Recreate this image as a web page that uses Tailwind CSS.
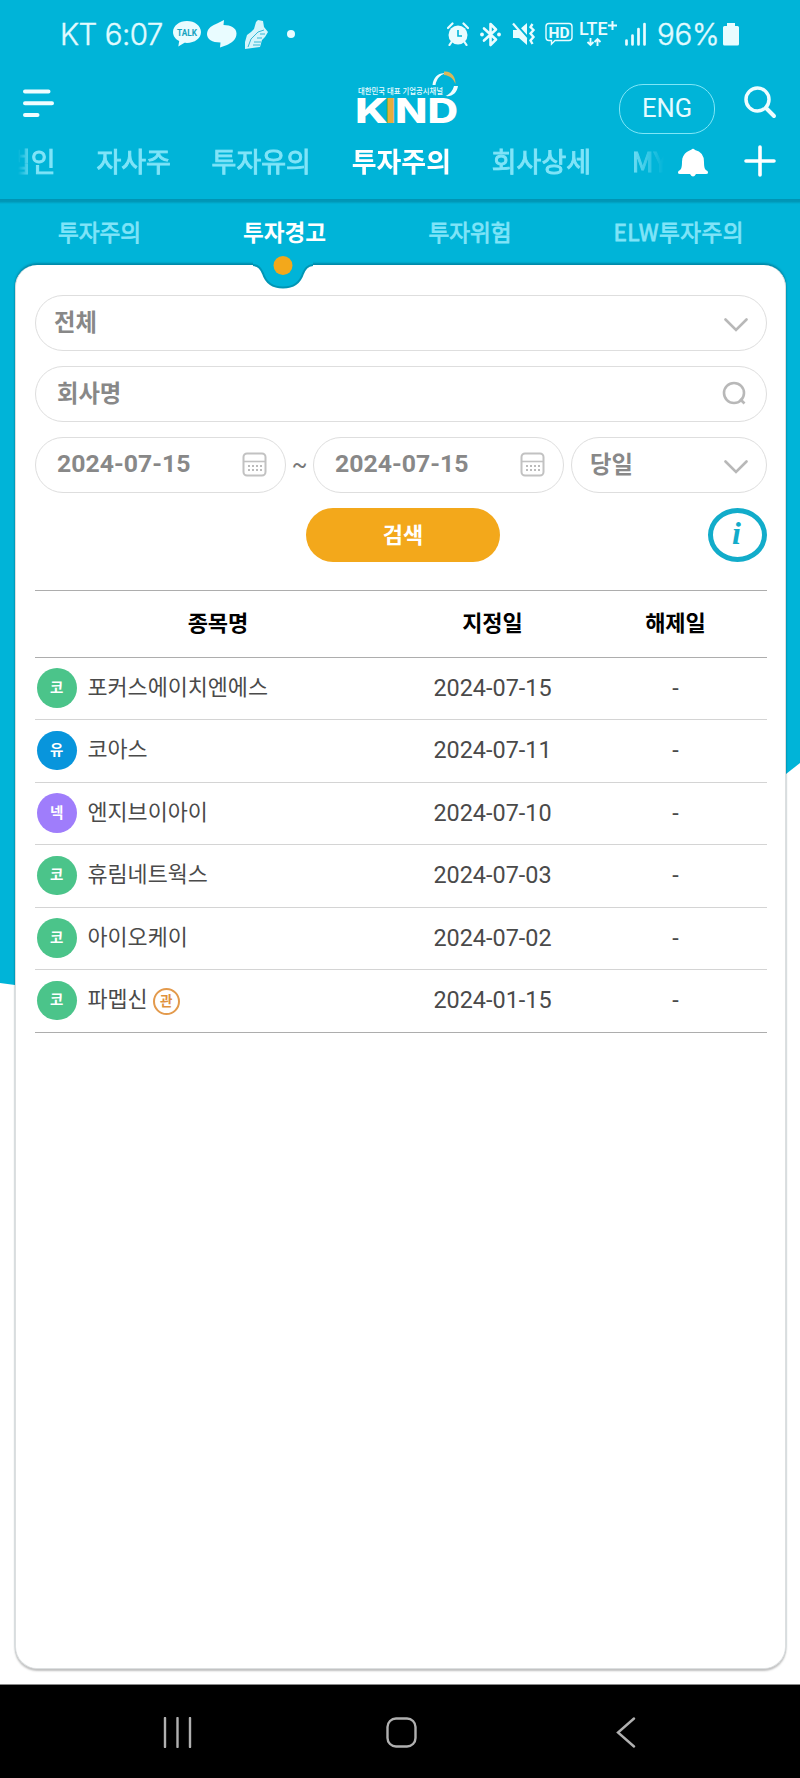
<!DOCTYPE html>
<html lang="ko">
<head>
    <meta charset="UTF-8">
    <meta name="viewport" content="width=device-width, initial-scale=1.0">
    <title>KIND - 투자경고</title>
    <script src="https://cdn.jsdelivr.net/npm/@tailwindcss/browser@4"></script>
</head>
<body class="bg-white font-['Roboto','Noto_Sans_CJK_KR',sans-serif] text-[#4a4a4a]">
<div class="relative w-[800px] h-[1778px] overflow-hidden flex flex-col">

    <!-- Slanted page background -->
    <svg class="absolute inset-0 -z-10" width="800" height="1000" viewBox="0 0 800 1000">
        <path d="M0 0H800V763L786 774L400 1010L15 985L0 983Z" fill="#00b4d8"/>
    </svg>

    <!-- Status bar -->
    <div class="h-[68px] shrink-0 flex items-center text-[#e2fbff] whitespace-nowrap">
        <span class="ml-[60px] w-[113px] text-[29.5px] font-light font-['Inter','Noto_Sans_CJK_KR',sans-serif] tracking-[-0.5px] [-webkit-text-stroke:0.4px_#e2fbff]">KT 6:07</span>
        <svg class="w-[28px] h-[28px]" viewBox="0 0 28 28">
            <path d="M14 1C6.300 1 0 5.800 0 12c0 4 2.500 7.200 6.200 9L5.300 26.500 11.500 22.800C20.500 23.800 28 19 28 12 28 5.800 21.700 1 14 1Z" fill="#e9fcff"/>
            <text x="4" y="15.500" font-family="Roboto" font-weight="700" font-size="9.500" textLength="20" lengthAdjust="spacingAndGlyphs" fill="#18a3bf">TALK</text>
        </svg>
        <svg class="ml-[6px] w-[30px] h-[28px]" viewBox="0 0 30 28">
            <path d="M17 0 16.500 5C24 5 29.500 8 29.500 13.500 29.500 20 24 23 20 25L13 27.500 13.500 22.500C5 22.500 0 19 0 14 0 8 6 5 10 3.500Z" fill="#e9fcff"/>
        </svg>
        <svg class="ml-[8px] w-[24px] h-[29px]" viewBox="0 0 24 29">
            <path d="M13 0 18 1 19 7 23 12 20 17 17 20 15 27 0 29V22L2 15 6 12 9 9 11 2Z" fill="#d5f5fb"/>
            <path d="M3 27 6 19 13 12 19 10M15 14 20 14M12 18 17 18M9 22 16 22M8 25 15 25" fill="none" stroke="#35b9d6" stroke-width="1"/>
        </svg>
        <span class="ml-[18px] size-[8px] rounded-full bg-[#e9fcff]"></span>

        <!-- Alarm -->
        <svg class="ml-[152px] w-[22px] h-[24px]" viewBox="0 0 22 24">
            <circle cx="11" cy="13" r="9.500" fill="#e9fcff"/>
            <path d="M1 6 5.500 1.500M21 6 16.500 1.500M4.500 20 2.500 23M17.500 20 19.500 23" stroke="#e9fcff" stroke-width="2.200" stroke-linecap="round"/>
            <path d="M11 8V14H15" fill="none" stroke="#00b4d8" stroke-width="1.600"/>
        </svg>
        <!-- Bluetooth -->
        <svg class="ml-[11px] w-[21px] h-[25px]" viewBox="0 0 21 25">
            <path d="M4 6.500 16 17.500 10.500 23V2L16 7.500 4 18.500" fill="none" stroke="#e9fcff" stroke-width="2.600" stroke-linejoin="round" stroke-linecap="round"/>
            <circle cx="2" cy="12.500" r="1.900" fill="#e9fcff"/>
            <circle cx="19" cy="12.500" r="1.900" fill="#e9fcff"/>
        </svg>
        <!-- Muted, vibrate -->
        <svg class="ml-[11px] w-[24px] h-[24px]" viewBox="0 0 24 24">
            <path d="M1 8H7L15 1V23L7 16H1Z" fill="#e9fcff"/>
            <path d="M1 -1 17 17" stroke="#00b4d8" stroke-width="2.500"/>
            <path d="M1 1.500 14.500 17" stroke="#e9fcff" stroke-width="2.200"/>
            <path d="M20.500 2 18.500 5 21.500 8 18.500 11.500 21.500 15 18.500 18.500 20.500 22" fill="none" stroke="#e9fcff" stroke-width="2.400"/>
        </svg>
        <!-- HD voice -->
        <svg class="ml-[9px] w-[28px] h-[24px]" viewBox="0 0 28 24">
            <path d="M4 1.500H24Q27 1.500 27 4.500V15.500Q27 18.500 24 18.500H10L6.500 22V18.500H4Q1 18.500 1 15.500V4.500Q1 1.500 4 1.500Z" fill="none" stroke="#e9fcff" stroke-width="1.400"/>
            <text x="3.500" y="15.500" font-family="Roboto" font-weight="700" font-size="15" textLength="21" lengthAdjust="spacingAndGlyphs" fill="#e9fcff">HD</text>
        </svg>
        <!-- LTE+ -->
        <svg class="ml-[7px] w-[38px] h-[26px] overflow-visible" viewBox="0 0 38 26">
            <text x="-1" y="14" font-family="Roboto" font-weight="500" font-size="17.500" textLength="28.500" lengthAdjust="spacingAndGlyphs" fill="#e9fcff">LTE</text>
            <path d="M32.500 0V9M28 4.500H37" stroke="#e9fcff" stroke-width="2"/>
            <path d="M10.500 17V24M7.500 21 10.500 24 13.500 21M17.500 25V18M14.500 21 17.500 18 20.500 21" fill="none" stroke="#e9fcff" stroke-width="1.900"/>
        </svg>
        <!-- Signal -->
        <svg class="ml-[7px] w-[22px] h-[24px]" viewBox="0 0 22 24">
            <path d="M1.500 18.500V22.500M7.500 13.500V22.500M13.500 7V22.500M19.500 2V22.500" stroke="#e9fcff" stroke-width="2.700" stroke-linecap="round"/>
        </svg>
        <span class="ml-[10px] w-[66px] text-[29.5px] font-light font-['Inter','Noto_Sans_CJK_KR',sans-serif] tracking-[-0.2px] [-webkit-text-stroke:0.4px_#e2fbff]">96%</span>
        <svg class="w-[16px] h-[24px]" viewBox="0 0 16 24">
            <path d="M4 1H12V4H14.500Q16 4 16 5.500V22Q16 23.500 14.500 23.500H1.500Q0 23.500 0 22V5.500Q0 4 1.500 4H4Z" fill="#e9fcff"/>
        </svg>
    </div>

    <!-- Brand row -->
    <header class="h-[69px] shrink-0 flex items-start">
        <svg class="ml-[23px] mt-[21px] w-[32px] h-[29px]" viewBox="0 0 32 29">
            <path d="M2 2.500H25.500M2 14.200H29M2 26H14.500" stroke="#effdff" stroke-width="4" stroke-linecap="round"/>
        </svg>
        <svg class="ml-[302px] mt-[2px] w-[102px] h-[56px] overflow-visible" viewBox="0 0 102 56">
            <text x="1" y="23.500" font-family="Noto Sans CJK KR" font-weight="500" font-size="8" textLength="85" lengthAdjust="spacingAndGlyphs" fill="#e6fbff">대한민국 대표 기업공시채널</text>
            <path d="M75.500 15C76.500 7 82 2.500 88 3.500 83 5 79.500 9 78.500 15Z" fill="#effdff"/>
            <path d="M87 1.500C94 .5 99 7 98.500 14 96.500 9 93 5.500 87 5Z" fill="#d9b75a"/>
            <path d="M101 16C100 23 95 27 88.500 26 93 24 95.500 21 97 16Z" fill="#effdff"/>
            <g font-family="Inter" font-weight="800" font-size="34">
                <text x="-2" y="53" textLength="33" lengthAdjust="spacingAndGlyphs" fill="#fff">K</text>
                <text x="28" y="53" textLength="11" lengthAdjust="spacingAndGlyphs" fill="#e5ae3c">I</text>
                <text x="38" y="53" textLength="63" lengthAdjust="spacingAndGlyphs" fill="#fff">ND</text>
            </g>
        </svg>
        <button class="ml-[160px] mt-[15.5px] w-[96px] h-[50px] rounded-[24px] border-[1.5px] border-[#7fe6f7] text-[#e6fbff] text-[25.5px] leading-none">ENG</button>
        <svg class="ml-[29px] mt-[18px] w-[33px] h-[33px]" viewBox="0 0 33 33">
            <circle cx="13.500" cy="13.500" r="11.500" fill="none" stroke="#effdff" stroke-width="3.500"/>
            <path d="M22 22 30 30" stroke="#effdff" stroke-width="4" stroke-linecap="round"/>
        </svg>
    </header>

    <!-- Main tabs -->
    <nav class="h-[62px] shrink-0 flex items-start pl-[18px]">
        <div class="w-[649px] h-[50px] overflow-hidden flex items-start [mask-image:linear-gradient(to_right,transparent,#000_15px,#000_610px,transparent_646px)]">
            <div class="-ml-[12px] flex gap-[40.7px] whitespace-nowrap text-[27px] leading-[48px] text-[#80e4f8] font-['Noto_Sans_CJK_KR',sans-serif]">
                <span class="[-webkit-text-stroke:0.9px_#80e4f8]">법인</span>
                <span class="[-webkit-text-stroke:0.9px_#80e4f8]">자사주</span>
                <span class="[-webkit-text-stroke:0.9px_#80e4f8]">투자유의</span>
                <span class="text-white font-bold">투자주의</span>
                <span class="[-webkit-text-stroke:0.9px_#80e4f8]">회사상세</span>
                <span class="[-webkit-text-stroke:0.9px_#80e4f8]">MY</span>
            </div>
        </div>
        <svg class="ml-[10px] mt-[11px] w-[32px] h-[30px]" viewBox="0 0 32 30">
            <path d="M14 2Q16-.5 18 2 27 4 27 14C27 20 28 22 30.500 23Q32 26 29 26H19Q16 31 13 26H3Q0 26 1.500 23C4 22 5 20 5 14 5 4 14 2 14 2Z" fill="#fff"/>
        </svg>
        <svg class="ml-[35px] mt-[8px] w-[32px] h-[32px]" viewBox="0 0 32 32">
            <path d="M16 2V30M2 16H30" stroke="#fff" stroke-width="3.600" stroke-linecap="round"/>
        </svg>
    </nav>
    <div class="h-[5px] shrink-0 bg-linear-to-b from-[#0093b3] via-[#0098b8] to-[#00b4d8]"></div>

    <!-- Sub tabs -->
    <nav class="h-[61px] shrink-0 flex items-start pt-[10px] text-[22.6px] leading-[36px] text-[#80e4f8] whitespace-nowrap font-['Noto_Sans_CJK_KR',sans-serif]">
        <span class="ml-[58px] w-[185px] [-webkit-text-stroke:0.8px_#80e4f8]">투자주의</span>
        <span class="w-[185.500px] text-white font-bold">투자경고</span>
        <span class="w-[185px] [-webkit-text-stroke:0.8px_#80e4f8]">투자위험</span>
        <span class="tracking-[0.5px] [-webkit-text-stroke:0.8px_#80e4f8]">ELW투자주의</span>
    </nav>

    <!-- Content card -->
    <main class="relative mx-[15px] w-[771px] h-[1404px] shrink-0 rounded-[22px] bg-white border-x border-b border-[#dcdfe0] shadow-[0_2px_2px_rgba(0,0,0,0.25),0_-2px_2px_rgba(0,60,80,0.35)] pl-[19px] pr-[18px]">
        <!-- Active tab notch -->
        <svg class="absolute left-[232px] -top-[12px]" width="70" height="40" viewBox="0 0 70 40">
            <path d="M5 6V12.500C11 13 13 16 15 20.500 18 30 25 35 35 35S52 30 55 20.500C57 16 59 13 65 12.500V6Z" fill="#00b4d8"/>
            <path d="M5 12C11 12.500 13 16 15 20.500 18 30 25 34.500 35 34.500S52 30 55 20.500C57 16 59 12.500 65 12" fill="none" stroke="#0096b5" stroke-width="2"/>
            <circle cx="35" cy="12.500" r="9.500" fill="#f3a81b"/>
        </svg>

        <!-- Search form -->
        <form class="pt-[30px] text-[#888] font-bold">
            <div class="h-[56px] rounded-full border border-[#dedede] flex items-center justify-between pl-[18px] pr-[18px]">
                <span class="text-[23.3px] leading-none pt-[2px]">전체</span>
                <svg class="mt-[3px] w-[24px] h-[14px]" viewBox="0 0 24 14"><path d="M1.500 1.500 12 12 22.500 1.500" fill="none" stroke="#b8b8b8" stroke-width="2.600" stroke-linecap="round"/></svg>
            </div>
            <div class="mt-[15px] h-[56px] rounded-full border border-[#dedede] flex items-center justify-between pl-[21px] pr-[20px]">
                <span class="text-[23.3px] leading-none pt-[2px]">회사명</span>
                <svg class="w-[24px] h-[24px] -mt-[2px]" viewBox="0 0 24 24"><circle cx="12" cy="12" r="10" fill="none" stroke="#b8b8b8" stroke-width="2.600"/><path d="M18 18 22.500 22.500" stroke="#b8b8b8" stroke-width="2.600"/></svg>
            </div>
            <div class="mt-[15px] h-[56px] flex items-center">
                <div class="w-[251px] h-full rounded-full border border-[#dedede] flex items-center justify-between pl-[21px] pr-[18px]">
                    <span class="text-[24.8px] leading-none pb-[1px]">2024-07-15</span>
                    <svg class="-mt-[2px] w-[25px] h-[25px]" viewBox="0 0 25 25"><rect x="1.500" y="1.500" width="22" height="22" rx="3.500" fill="none" stroke="#c2c2c2" stroke-width="2"/><path d="M1.500 9.500H23.500" stroke="#c2c2c2" stroke-width="1.600"/><path d="M6 14H20M6 18H20" stroke="#bbb" stroke-width="1.900" stroke-dasharray="2 2"/></svg>
                </div>
                <span class="w-[27px] text-center text-[23px] font-normal text-[#777] pt-[2px]">~</span>
                <div class="w-[251px] h-full rounded-full border border-[#dedede] flex items-center justify-between pl-[21px] pr-[18px]">
                    <span class="text-[24.8px] leading-none pb-[1px]">2024-07-15</span>
                    <svg class="-mt-[2px] w-[25px] h-[25px]" viewBox="0 0 25 25"><rect x="1.500" y="1.500" width="22" height="22" rx="3.500" fill="none" stroke="#c2c2c2" stroke-width="2"/><path d="M1.500 9.500H23.500" stroke="#c2c2c2" stroke-width="1.600"/><path d="M6 14H20M6 18H20" stroke="#bbb" stroke-width="1.900" stroke-dasharray="2 2"/></svg>
                </div>
                <div class="ml-[7px] flex-1 h-full rounded-full border border-[#dedede] flex items-center justify-between pl-[18px] pr-[18px]">
                    <span class="text-[23.3px] leading-none pt-[1px]">당일</span>
                    <svg class="mt-[3px] w-[24px] h-[14px]" viewBox="0 0 24 14"><path d="M1.500 1.500 12 12 22.500 1.500" fill="none" stroke="#b8b8b8" stroke-width="2.600" stroke-linecap="round"/></svg>
                </div>
            </div>
            <div class="mt-[15px] flex justify-between">
                <button type="button" class="ml-[271px] w-[194px] h-[54px] rounded-full bg-[#f3a81b] text-white text-[22px] leading-none pt-[2px]">검색</button>
                <button type="button" class="w-[59px] h-[54px] rounded-[50%] border-[5px] border-[#12acca] text-[#12acca] font-['Liberation_Serif',serif] italic font-bold text-[32px] leading-none pb-[4px] pr-[2px]">i</button>
            </div>
        </form>

        <!-- Result table -->
        <table class="mt-[28px] w-full table-fixed border-collapse border-y border-[#adadad] text-[22px] leading-none">
            <thead>
                <tr class="h-[66.5px] border-b border-[#adadad] text-black">
                    <th class="w-1/2 font-bold">종목명</th>
                    <th class="w-1/4 font-bold">지정일</th>
                    <th class="w-1/4 font-bold">해제일</th>
                </tr>
            </thead>
            <tbody id="rows"></tbody>
        </table>
    </main>

    <!-- Android navigation bar -->
    <div class="mt-auto h-[94px] shrink-0 bg-black border-t border-[#888] flex items-start pt-[32px]">
        <svg class="ml-[162px] w-[31px] h-[31px]" viewBox="0 0 31 31"><path d="M3 1V30M15.500 1V30M28 1V30" stroke="#b0b0b0" stroke-width="2.400" stroke-linecap="round"/></svg>
        <svg class="ml-[193px] w-[31px] h-[31px]" viewBox="0 0 31 31"><rect x="1.500" y="1.500" width="28" height="28" rx="8.500" fill="none" stroke="#b0b0b0" stroke-width="2.400"/></svg>
        <svg class="ml-[199px] w-[20px] h-[31px]" viewBox="0 0 20 31"><path d="M18 1.500 2 15.500 18 29.500" fill="none" stroke="#b0b0b0" stroke-width="2.400" stroke-linecap="round"/></svg>
    </div>
</div>

<script>
    const badges = { '코': 'bg-[#4bc48a]', '유': 'bg-[#0895dc]', '넥': 'bg-[#9f7dfb]' };
    const rows = [
        ['코', '포커스에이치엔에스', '2024-07-15'],
        ['유', '코아스', '2024-07-11'],
        ['넥', '엔지브이아이', '2024-07-10'],
        ['코', '휴림네트웍스', '2024-07-03'],
        ['코', '아이오케이', '2024-07-02'],
        ['코', '파멥신', '2024-01-15', '관'],
    ];

    document.getElementById('rows').innerHTML = rows.map(([market, name, date, mark]) => `
        <tr class="h-[62.5px] border-b border-[#d4d4d4] last:border-[#adadad]">
            <td class="p-0">
                <div class="flex items-center pl-[2px] pb-[1px]">
                    <span class="size-[39.5px] rounded-full ${badges[market]} text-white text-[14.5px] font-bold flex items-center justify-center pt-[2px]">${market}</span>
                    <span class="ml-[11px] text-[21.8px]">${name}</span>
                    ${mark ? `<span class="ml-[5px] mt-[2px] size-[27px] rounded-full border-2 border-[#e39a4c] text-[#e0913c] text-[13.5px] font-bold flex items-center justify-center pt-[1px]">${mark}</span>` : ''}
                </div>
            </td>
            <td class="p-0 text-center text-[23.4px]">${date}</td>
            <td class="p-0 text-center text-[23.4px]">-</td>
        </tr>`).join('');
</script>
</body>
</html>
